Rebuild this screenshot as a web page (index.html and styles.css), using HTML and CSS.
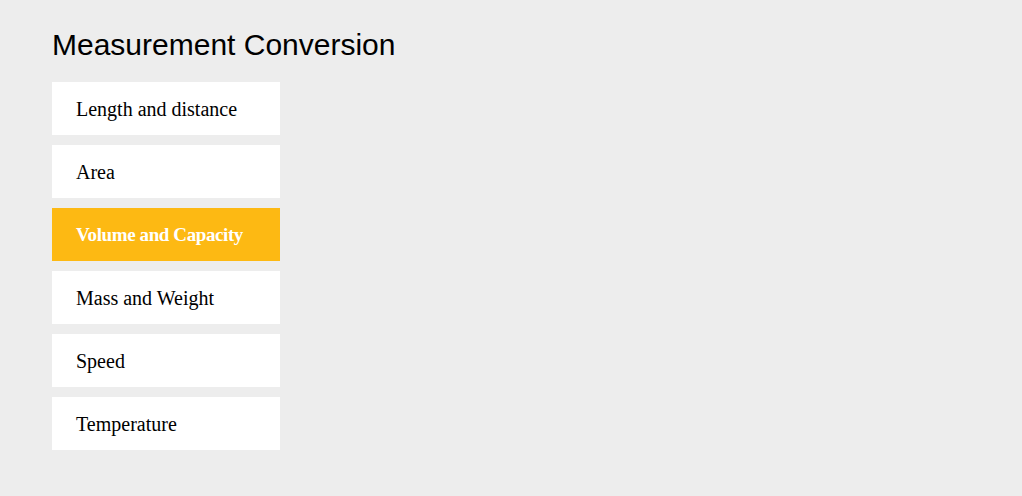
FILE: index.html
```html
<!DOCTYPE html>
<html>
<head>
<meta charset="utf-8">
<link rel="stylesheet" href="styles.css">
</head>
<body>
<div class="page">
  <h1 class="title">Measurement Conversion</h1>
  <ul class="menu">
    <li class="item">Length and distance</li>
    <li class="item">Area</li>
    <li class="item active">Volume and Capacity</li>
    <li class="item">Mass and Weight</li>
    <li class="item">Speed</li>
    <li class="item">Temperature</li>
  </ul>
</div>
</body>
</html>
```
FILE: styles.css
```css
html, body {
  margin: 0;
  padding: 0;
  background: #ededed;
}
.page {
  padding: 27px 52px;
}
.title {
  margin: 0 0 20px 0;
  font-family: "Liberation Sans", Arial, sans-serif;
  font-weight: normal;
  font-size: 30px;
  line-height: 35px;
  color: #000;
}
.menu {
  list-style: none;
  margin: 0;
  padding: 0;
  width: 228px;
  display: flex;
  flex-direction: column;
  gap: 10px;
}
.item {
  height: 53px;
  box-sizing: border-box;
  padding-left: 24px;
  padding-top: 1px;
  display: flex;
  align-items: center;
  background: #fff;
  font-family: "Liberation Serif", Georgia, serif;
  font-size: 20px;
  color: #000;
}
.item.active {
  background: #fdb913;
  color: #fff;
  font-weight: bold;
  font-size: 19px;
  letter-spacing: -0.4px;
}
```
